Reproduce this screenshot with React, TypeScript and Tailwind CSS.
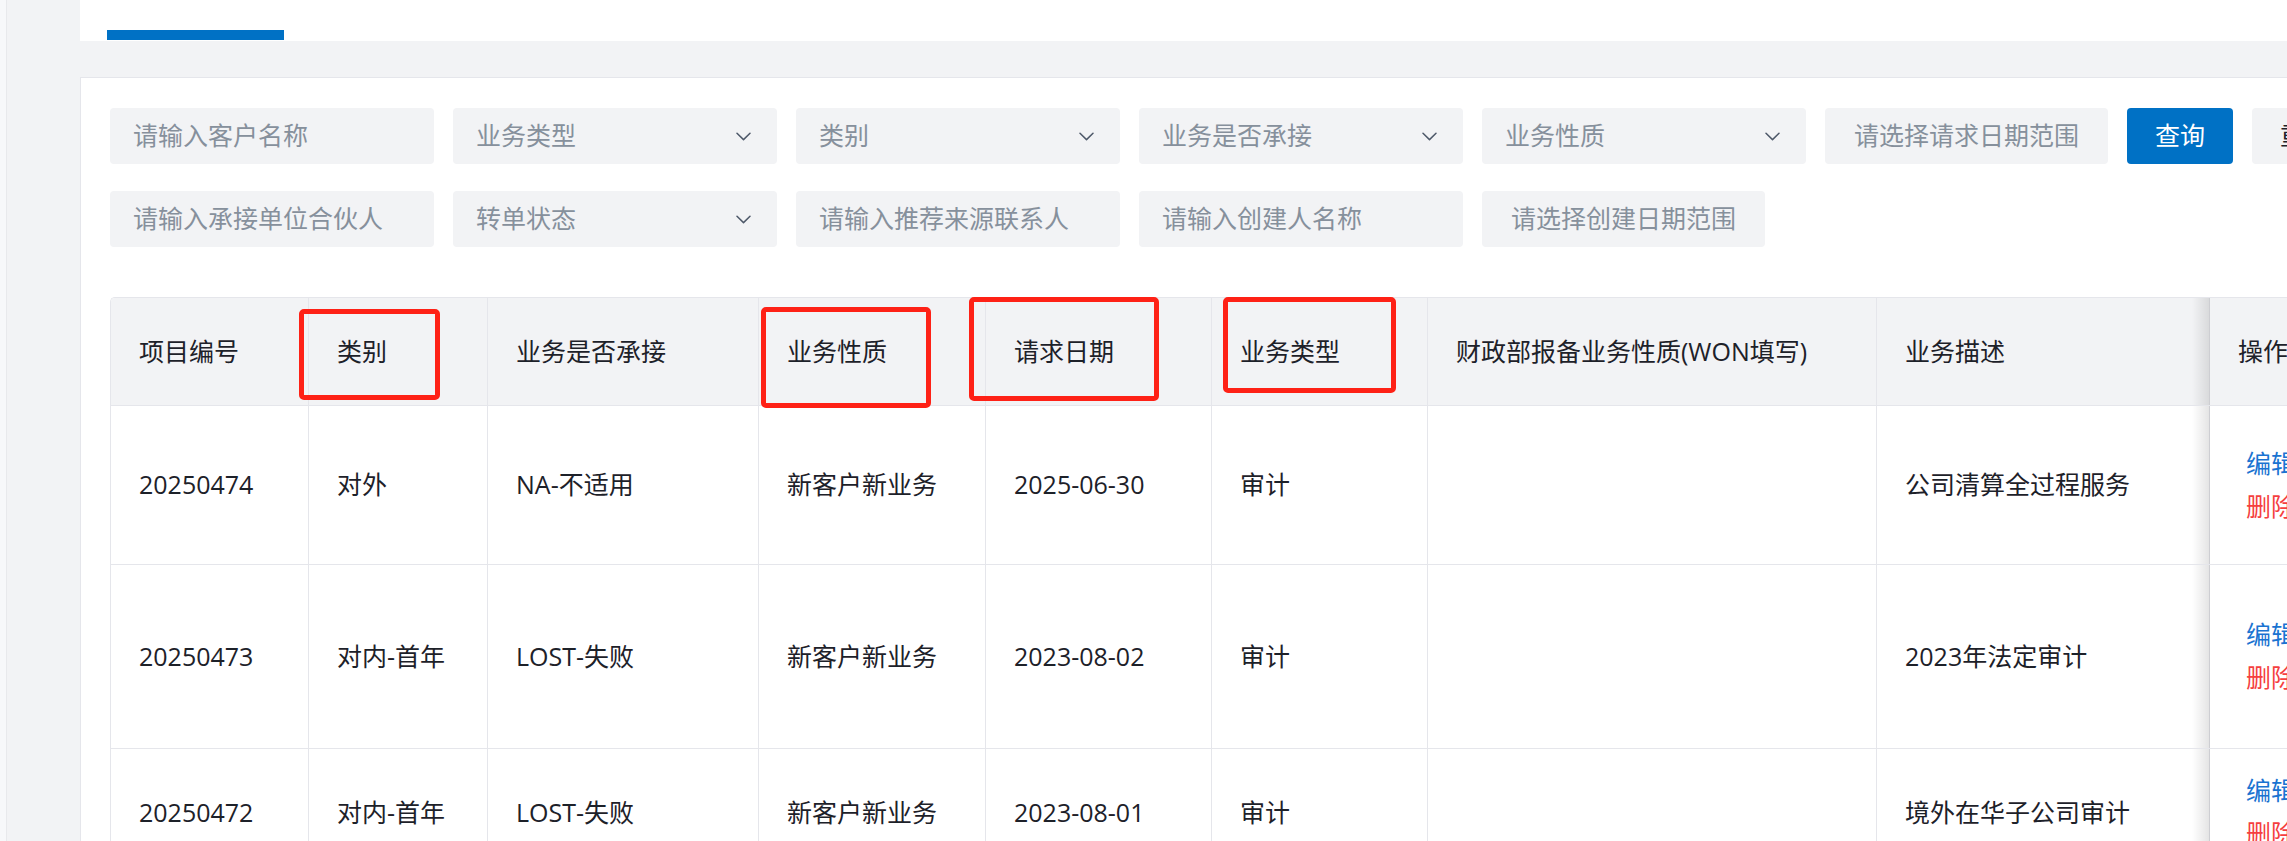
import React from "react";

const box =
  "h-[56px] shrink-0 rounded-[4px] bg-[#f2f3f5] flex items-center text-[25px] text-[#86909c] whitespace-nowrap";

function Chevron() {
  return (
    <svg width="15" height="9" viewBox="0 0 15 9" fill="none" className="shrink-0">
      <path d="M1 1.2 L7.5 7.6 L14 1.2" stroke="#4e5969" strokeWidth="1.5" strokeLinecap="round" strokeLinejoin="round" />
    </svg>
  );
}

function TextInput({ text }: { text: string }) {
  return <div className={`${box} w-[324px] pl-[23px]`}>{text}</div>;
}

function SelectBox({ text }: { text: string }) {
  return (
    <div className={`${box} w-[324px] pl-[23px] pr-[26px] justify-between`}>
      <span>{text}</span>
      <Chevron />
    </div>
  );
}

function DateRange({ text }: { text: string }) {
  return <div className={`${box} w-[283px] justify-center`}>{text}</div>;
}

type Row = {
  id: string;
  cat: string;
  acc: string;
  nature: string;
  date: string;
  type: string;
  won: string;
  desc: string;
  h: string;
};

const rows: Row[] = [
  { id: "20250474", cat: "对外", acc: "NA-不适用", nature: "新客户新业务", date: "2025-06-30", type: "审计", won: "", desc: "公司清算全过程服务", h: "h-[159px]" },
  { id: "20250473", cat: "对内-首年", acc: "LOST-失败", nature: "新客户新业务", date: "2023-08-02", type: "审计", won: "", desc: "2023年法定审计", h: "h-[184px]" },
  { id: "20250472", cat: "对内-首年", acc: "LOST-失败", nature: "新客户新业务", date: "2023-08-01", type: "审计", won: "", desc: "境外在华子公司审计", h: "h-[128px]" },
];

const gridCols =
  "grid grid-cols-[198px_179px_271px_227px_226px_216px_449px_333px_160px]";

const headers = [
  "项目编号",
  "类别",
  "业务是否承接",
  "业务性质",
  "请求日期",
  "业务类型",
  "财政部报备业务性质(WON填写)",
  "业务描述",
];

const cellBase =
  "flex items-center px-[28px] border-r border-b border-[#e5e6eb] whitespace-nowrap overflow-hidden";

function Shadow() {
  return (
    <div className="absolute top-0 bottom-0 -left-[18px] w-[18px] bg-linear-to-l from-[rgba(0,0,0,0.11)] to-transparent pointer-events-none" />
  );
}

export default function App() {
  return (
    <div className="flex w-[2287px] h-[841px] overflow-hidden bg-white font-['Open_Sans','Noto_Sans_CJK_SC',sans-serif] text-[#1d2129]">
      {/* left sidebar strip */}
      <div className="w-[80px] shrink-0 flex">
        <div className="w-[7px] bg-[#f7f8fa] border-r border-[#e8e9ec]" />
        <div className="flex-1 bg-[#f2f3f5]" />
      </div>

      {/* main */}
      <div className="flex-1 flex flex-col bg-[#f2f3f5] min-w-0">
        {/* tab bar */}
        <div className="h-[41px] shrink-0 bg-white pl-[27px] pt-[30px]">
          <div className="w-[177px] h-[10px] bg-[#0071c5]" />
        </div>

        {/* card */}
        <div className="mt-[36px] flex-1 bg-white border-t border-l border-[#e5e6eb] pl-[29px] pt-[30px]">
          {/* filters */}
          <div className="flex flex-col gap-[27px]">
            <div className="flex gap-[19px]">
              <TextInput text="请输入客户名称" />
              <SelectBox text="业务类型" />
              <SelectBox text="类别" />
              <SelectBox text="业务是否承接" />
              <SelectBox text="业务性质" />
              <DateRange text="请选择请求日期范围" />
              <button className="h-[56px] w-[106px] shrink-0 rounded-[4px] bg-[#0071c5] text-white text-[25px] flex items-center justify-center">
                查询
              </button>
              <button className="h-[56px] w-[106px] shrink-0 rounded-[4px] bg-[#f2f3f5] text-[#1d2129] text-[25px] flex items-center pl-[28px]">
                重置
              </button>
            </div>
            <div className="flex gap-[19px]">
              <TextInput text="请输入承接单位合伙人" />
              <SelectBox text="转单状态" />
              <TextInput text="请输入推荐来源联系人" />
              <TextInput text="请输入创建人名称" />
              <DateRange text="请选择创建日期范围" />
            </div>
          </div>

          {/* table */}
          <div className="relative mt-[50px] text-[25px]">
            <div className="border-t border-l border-[#e5e6eb] rounded-tl-[5px] overflow-hidden w-max">
              {/* header */}
              <div className={gridCols}>
                {headers.map((h) => (
                  <div key={h} className={`${cellBase} h-[108px] bg-[#f2f3f5]`}>
                    {h}
                  </div>
                ))}
                <div className="relative h-[108px] flex items-center px-[28px] border-b border-[#e5e6eb] bg-[#f2f3f5]">
                  <Shadow />
                  操作
                </div>
              </div>
              {/* rows */}
              {rows.map((r) => (
                <div key={r.id} className={gridCols}>
                  <div className={`${cellBase} ${r.h}`}>{r.id}</div>
                  <div className={`${cellBase} ${r.h}`}>{r.cat}</div>
                  <div className={`${cellBase} ${r.h}`}>{r.acc}</div>
                  <div className={`${cellBase} ${r.h}`}>{r.nature}</div>
                  <div className={`${cellBase} ${r.h}`}>{r.date}</div>
                  <div className={`${cellBase} ${r.h}`}>{r.type}</div>
                  <div className={`${cellBase} ${r.h}`}>{r.won}</div>
                  <div className={`${cellBase} ${r.h}`}>{r.desc}</div>
                  <div className={`relative ${r.h} flex flex-col justify-center pl-[36px] border-b border-[#e5e6eb] bg-white`}>
                    <Shadow />
                    <span className="h-[43px] flex items-center text-[#1a73d1]">编辑</span>
                    <span className="h-[43px] flex items-center text-[#f53f3f]">删除</span>
                  </div>
                </div>
              ))}
            </div>

            {/* red annotation boxes */}
            <div className="absolute left-[189px] top-[12px] w-[141px] h-[91px] border-[5px] border-[#fe2116] rounded-[5px] pointer-events-none" />
            <div className="absolute left-[651px] top-[10px] w-[170px] h-[101px] border-[5px] border-[#fe2116] rounded-[5px] pointer-events-none" />
            <div className="absolute left-[859px] top-[0px] w-[190px] h-[104px] border-[5px] border-[#fe2116] rounded-[5px] pointer-events-none" />
            <div className="absolute left-[1113px] top-[0px] w-[173px] h-[96px] border-[5px] border-[#fe2116] rounded-[5px] pointer-events-none" />
          </div>
        </div>
      </div>
    </div>
  );
}
